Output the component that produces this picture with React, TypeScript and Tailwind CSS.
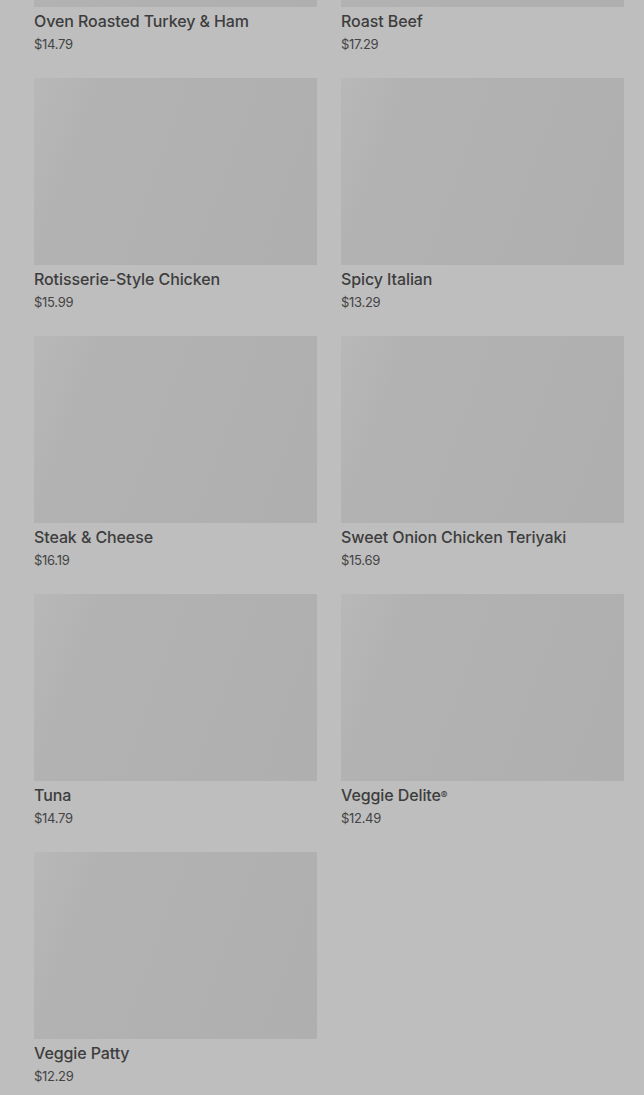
const items = [
  { name: 'Oven Roasted Turkey & Ham', price: '$14.79' },
  { name: 'Roast Beef', price: '$17.29' },
  { name: 'Rotisserie-Style Chicken', price: '$15.99' },
  { name: 'Spicy Italian', price: '$13.29' },
  { name: 'Steak & Cheese', price: '$16.19' },
  { name: 'Sweet Onion Chicken Teriyaki', price: '$15.69' },
  { name: 'Tuna', price: '$14.79' },
  { name: 'Veggie Delite®', price: '$12.49' },
  { name: 'Veggie Patty', price: '$12.29' },
]

const MenuCard = ({ name, price }: { name: string; price: string }) => {
  const reg = name.endsWith('®')
  return (
    <div className="flex flex-col">
      <div className="h-[187px] w-full bg-[#b0b0b0] bg-[linear-gradient(110deg,#b8b8b8_0%,#b2b2b2_20%,#afafaf_100%)]" />
      <div className="mt-[4px] text-[16px] leading-[20px] font-medium text-[#3d3d3d] tracking-[-0.1px]">
        {reg ? (
          <>
            {name.slice(0, -1)}
            <span className="text-[10px] align-top">®</span>
          </>
        ) : (
          name
        )}
      </div>
      <div className="mt-[4px] text-[13px] leading-[18px] text-[#444444] tracking-[-0.3px]">{price}</div>
    </div>
  )
}

export default function App() {
  return (
    <div
      className="w-[644px] h-[1095px] overflow-hidden bg-[#bebebe]"
      style={{ fontFamily: 'Inter, "Open Sans", sans-serif' }}
    >
      <div className="mt-[-180px] pl-[34px] pr-[20px] grid grid-cols-2 gap-x-[24px] gap-y-[25px]">
        {items.map((item) => (
          <MenuCard key={item.name} name={item.name} price={item.price} />
        ))}
      </div>
    </div>
  )
}
